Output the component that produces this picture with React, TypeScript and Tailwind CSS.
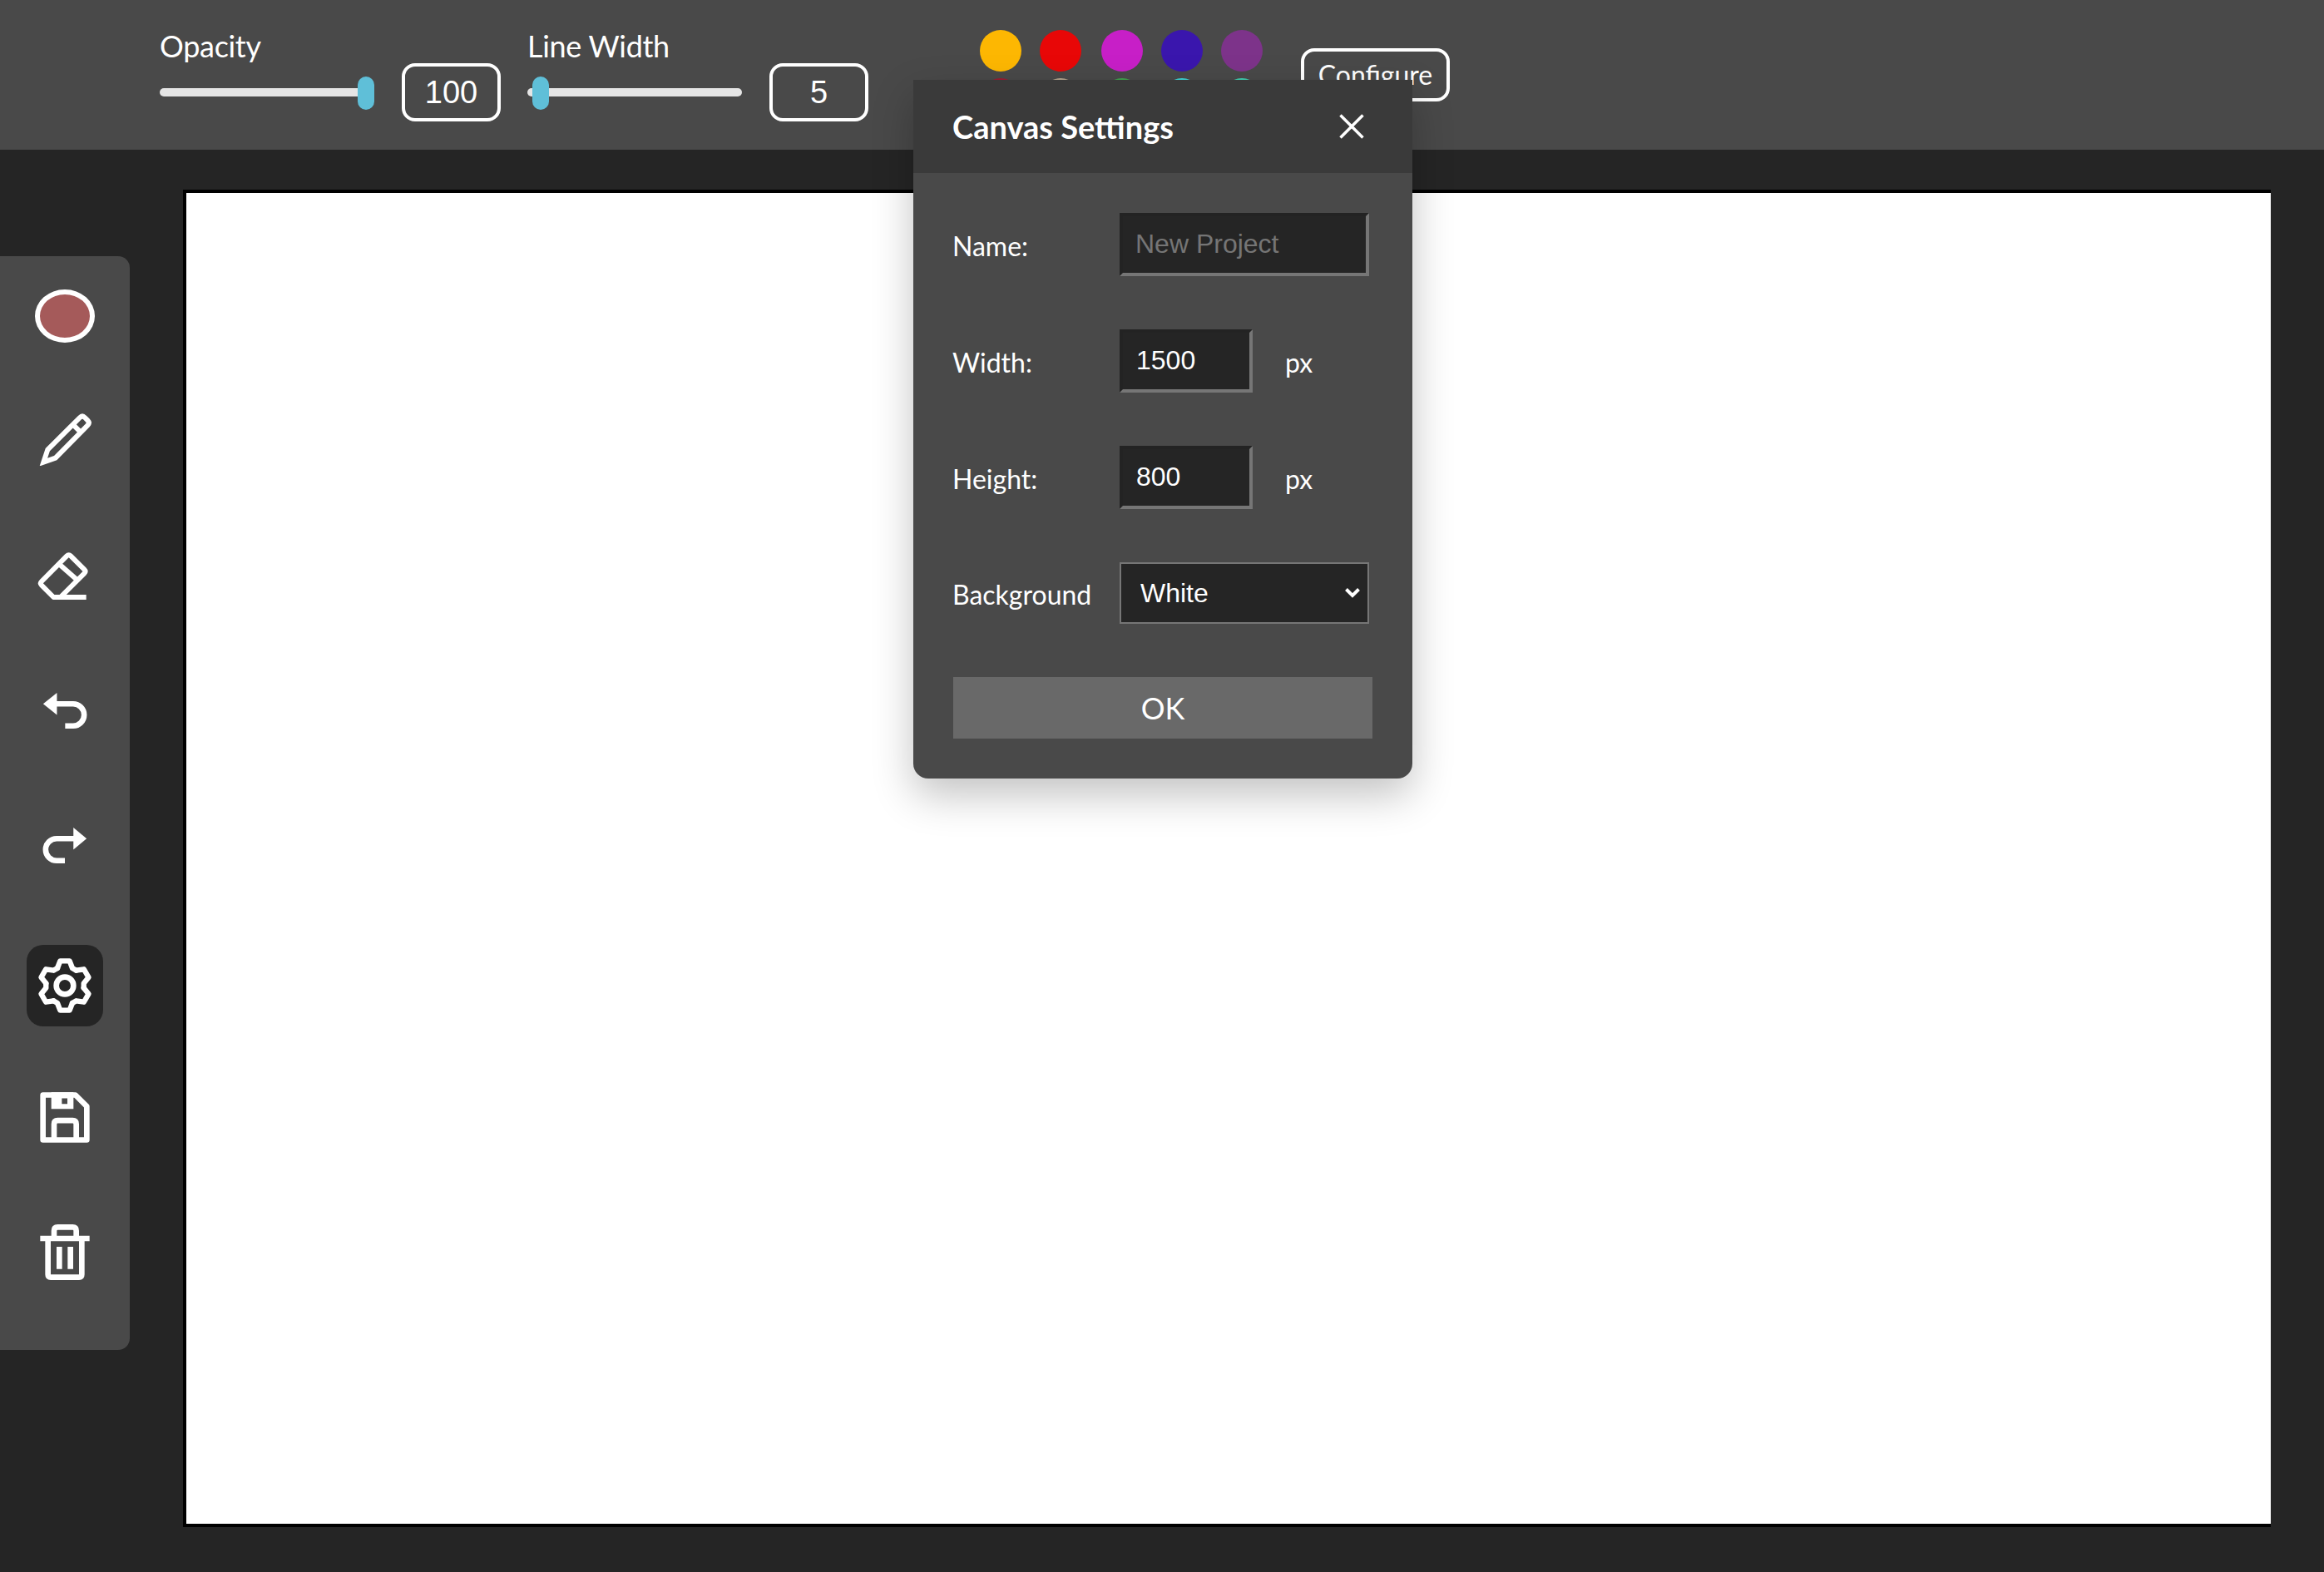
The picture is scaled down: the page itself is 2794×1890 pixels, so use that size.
const swatches = [
  "bg-[#fdb702] ml-0",
  "bg-[#e80707] ml-[22px]",
  "bg-[#c71fc7] ml-[24px]",
  "bg-[#3a16ad] ml-[22px]",
  "bg-[#7d338a] ml-[22px]",
];

const lowerSwatches = [
  "bg-[#9b1c31] ml-0",
  "bg-[#b5a48c] ml-[22px]",
  "bg-[#3fa34d] ml-[24px]",
  "bg-[#3dd5d5] ml-[22px]",
  "bg-[#3fd0b0] ml-[22px]",
];

function Slider({ label, value, thumbClass }: { label: string; value: string; thumbClass: string }) {
  return (
    <div className="pt-[34px]">
      <div className="text-[36px] leading-[42px] tracking-[-0.3px] text-white">{label}</div>
      <div className="flex">
        <div className="relative h-[70px] w-[258px]">
          <div className="mt-[30px] h-[10px] rounded-full bg-[#e5e5e5]" />
          <div className={"absolute top-[16px] h-[40px] w-[20px] rounded-full bg-[#5fbfd8] " + thumbClass} />
        </div>
        <div className="ml-[33px] flex h-[70px] w-[119px] items-center justify-center rounded-[16px] border-4 border-white font-['Liberation_Sans',Arial,sans-serif] text-[38px] text-white">
          {value}
        </div>
      </div>
    </div>
  );
}

function Toolbar() {
  return (
    <header className="flex h-[180px] bg-[#494949] pl-[192px]">
      <Slider label="Opacity" value="100" thumbClass="left-[238px]" />
      <div className="ml-[32px]">
        <Slider label="Line Width" value="5" thumbClass="left-[6px]" />
      </div>
      <div className="ml-[134px] pt-[36px]">
        <div className="flex">
          {swatches.map((c, i) => (
            <div key={i} className={"h-[50px] w-[50px] rounded-full " + c} />
          ))}
        </div>
        <div className="mt-[8px] flex">
          {lowerSwatches.map((c, i) => (
            <div key={i} className={"h-[50px] w-[50px] rounded-full " + c} />
          ))}
        </div>
      </div>
      <div className="ml-[46px] pt-[58px]">
        <button className="h-[64px] w-[179px] rounded-[16px] border-4 border-white text-[32px] leading-none text-white">
          Configure
        </button>
      </div>
    </header>
  );
}

function Sidebar() {
  return (
    <aside className="mt-[128px] flex h-[1315px] w-[156px] flex-col items-center rounded-r-[14px] bg-[#494949] pt-[40px] text-white">
      <div className="h-[64px] w-[72px] rounded-[50%] border-[6px] border-white bg-[#a55a5a]" />

      {/* pencil */}
      <svg className="mt-[85px] h-[63px] w-[72px]" viewBox="126 621 216 189" fill="none" stroke="white" strokeWidth="18">
        <path d="M157 797 L172 752 L288 636 Q297 627 306 636 L316 646 Q325 655 316 664 L200 782 Z" strokeLinejoin="miter" />
        <path d="M266 664 L292 690" />
      </svg>

      {/* eraser */}
      <svg className="mt-[102px] h-[59px] w-[72px]" viewBox="126 1115 216 177" fill="none" stroke="white" strokeWidth="18">
        <path d="M150 1226 Q143 1233 150 1240 L193 1283 H218 L304 1197 Q311 1190 304 1183 L255 1134 Q248 1127 241 1134 Z" strokeLinejoin="round" />
        <path d="M216 1166 L280 1222" />
        <path d="M193 1283 H311" />
      </svg>

      {/* undo */}
      <svg className="mt-[112px] h-[43px] w-[72px]" viewBox="126 188 216 130" fill="none" stroke="white" strokeWidth="20">
        <path d="M200 228 H264 A40 40 0 0 1 264 308 H235" />
        <path d="M155 228 L205 188 V268 Z" fill="white" stroke="none" />
      </svg>

      {/* redo */}
      <svg className="mt-[119px] h-[43px] w-[72px]" viewBox="126 674 216 130" fill="none" stroke="white" strokeWidth="20">
        <path d="M270 714 H204 A40 40 0 0 0 204 794 H234" />
        <path d="M313 714 L265 674 V754 Z" fill="white" stroke="none" />
      </svg>

      <div className="mt-[98px] flex h-[98px] w-[92px] items-center justify-center rounded-[20px] bg-[#252525]">
        <svg className="h-[72px] w-[72px]" viewBox="-108 -108 216 216" fill="none" stroke="white" strokeWidth="19" strokeLinejoin="round" strokeLinecap="round">
          {[0, 60, 120, 180, 240, 300].map((deg) => (
            <path key={deg} transform={`rotate(${deg})`} d="M-27 -63 L-17 -89 H17 L27 -63 L41 -55" />
          ))}
          <circle r="31" strokeWidth="20" />
        </svg>
      </div>

      {/* save */}
      <svg className="mt-[79px] h-[61px] w-[72px]" viewBox="126 190 216 182" fill="none" stroke="white" strokeWidth="20">
        <path d="M155 200 H272 L313 241 V362 H155 Z" strokeLinejoin="round" />
        <path d="M185 190 H265 V250 H185 Z M223 212 V232 H243 V212 Z" fill="white" fillRule="evenodd" stroke="none" />
        <path d="M195 362 V305 Q195 292 208 292 H262 Q275 292 275 305 V362" />
      </svg>

      {/* trash */}
      <svg className="mt-[98px] h-[67px] w-[72px]" viewBox="126 667 216 201" fill="none" stroke="white" strokeWidth="20">
        <path d="M145 718 H323" />
        <path d="M195 718 V690 Q195 677 208 677 H262 Q275 677 275 690 V718" />
        <path d="M173 718 V848 Q173 858 183 858 H285 Q295 858 295 848 V718" />
        <path d="M214 748 V828 M254 748 V828" />
      </svg>
    </aside>
  );
}

function SizeRow({ label, value }: { label: string; value: string }) {
  return (
    <div className="mt-[64px] flex h-[76px] items-center">
      <label className="-ml-[1px] w-[201px] pt-[4px] text-[32px] text-white">{label}</label>
      <input
        defaultValue={value}
        className="h-[76px] w-[160px] border-4 border-t-[#232323] border-r-[#767676] border-b-[#767676] border-l-[#232323] bg-[#252525] pb-[2px] pl-[16px] font-['Liberation_Sans',Arial,sans-serif] text-[32px] text-white outline-none"
      />
      <span className="ml-[39px] pt-[4px] text-[32px] text-white">px</span>
    </div>
  );
}

function SettingsModal() {
  return (
    <div className="absolute top-[96px] left-[1098px] w-[600px] rounded-b-[18px] bg-[#494949] shadow-[0_20px_50px_rgba(0,0,0,0.24)]">
      <div className="flex h-[112px] items-center justify-between bg-[#3a3a3a] pr-[58px] pl-[47px]">
        <h2 className="text-[38px] font-bold text-white">Canvas Settings</h2>
        <svg className="h-[30px] w-[30px]" viewBox="0 0 30 30" fill="none" stroke="white" strokeWidth="3.5">
          <path d="M1.5 1.5 L28.5 28.5 M28.5 1.5 L1.5 28.5" />
        </svg>
      </div>
      <div className="pb-[48px] pl-[48px]">
        <div className="flex h-[124px] items-end">
          <label className="-ml-[1px] flex h-[76px] w-[201px] items-center pt-[4px] text-[32px] text-white">Name:</label>
          <input
            placeholder="New Project"
            className="h-[76px] w-[300px] border-4 border-t-[#232323] border-r-[#767676] border-b-[#767676] border-l-[#232323] bg-[#252525] pb-[2px] pl-[15px] font-['Liberation_Sans',Arial,sans-serif] text-[32px] text-white outline-none placeholder:text-[#757575]"
          />
        </div>
        <SizeRow label="Width:" value="1500" />
        <SizeRow label="Height:" value="800" />
        <div className="mt-[64px] flex h-[74px] items-center">
          <label className="-ml-[1px] w-[201px] pt-[3px] text-[32px] text-white">Background</label>
          <div className="relative">
            <select className="block h-[74px] w-[300px] appearance-none rounded-none border-2 border-[#767676] bg-[#252525] pl-[23px] font-['Liberation_Sans',Arial,sans-serif] text-[32px] text-white outline-none">
              <option>White</option>
            </select>
            <svg className="absolute top-[31px] left-[271px] h-[12px] w-[18px]" viewBox="0 0 18 12" fill="none" stroke="white" strokeWidth="4">
              <path d="M1.5 1.5 L9 9 L16.5 1.5" />
            </svg>
          </div>
        </div>
        <button className="mt-[64px] block h-[74px] w-[504px] bg-[#696969] text-[36px] text-white">OK</button>
      </div>
    </div>
  );
}

export default function App() {
  return (
    <div className="relative h-[1890px] w-[2794px] overflow-hidden bg-[#252525] font-['Lato',sans-serif]">
      <Toolbar />
      <main className="flex items-start">
        <Sidebar />
        <div className="mt-[48px] ml-[64px] h-[1608px] w-[2510px] border-t-4 border-b-4 border-l-4 border-black bg-white" />
      </main>
      <SettingsModal />
    </div>
  );
}
